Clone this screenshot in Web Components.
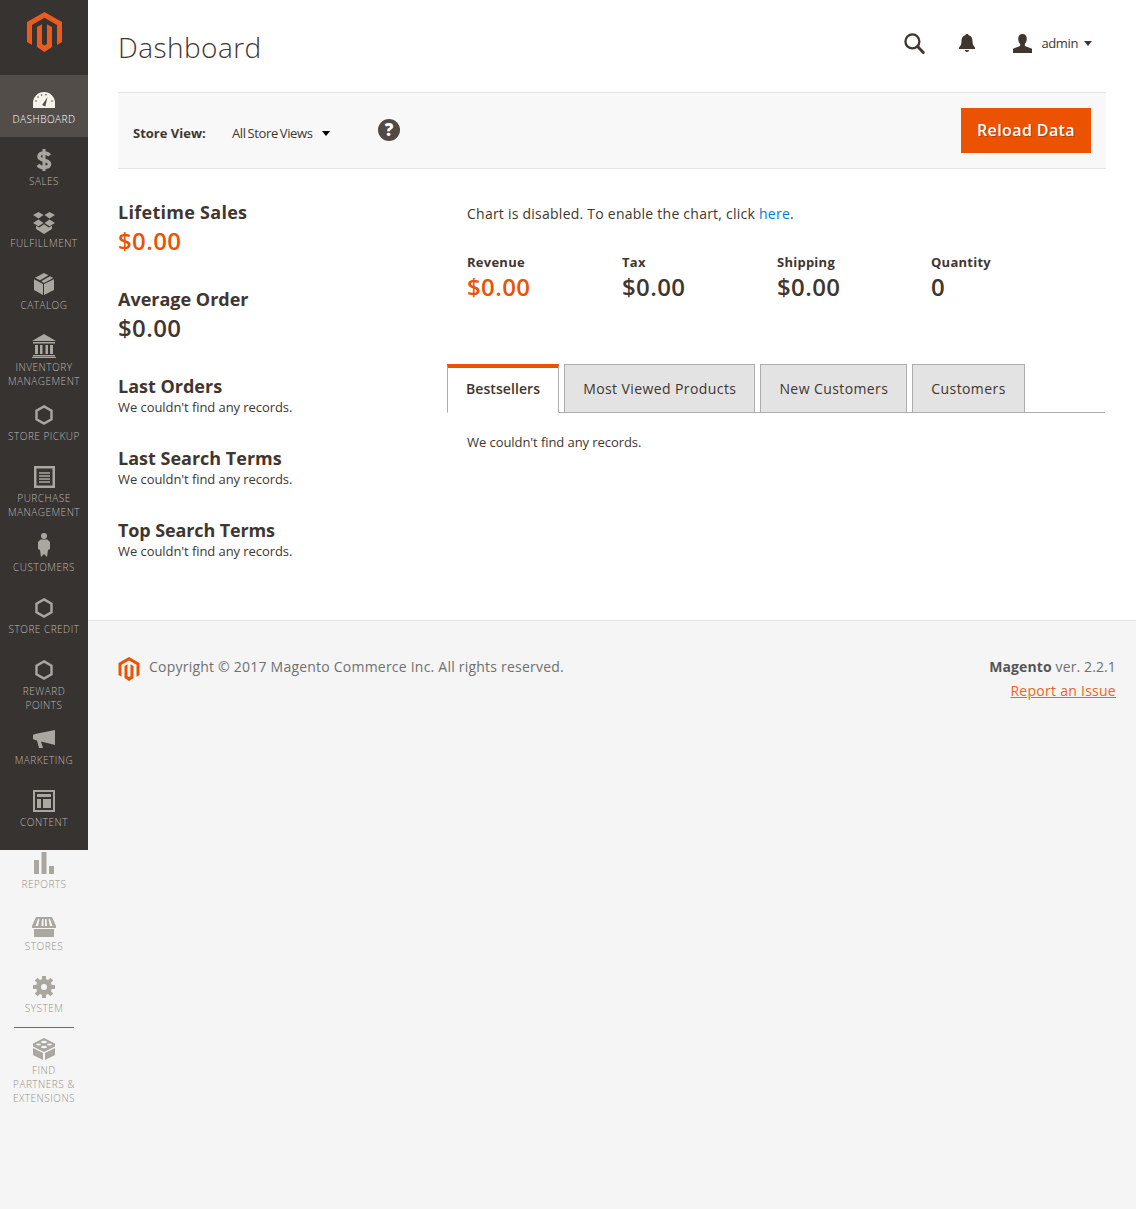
<!DOCTYPE html>
<html lang="en">
<head>
<meta charset="utf-8">
<title>Dashboard</title>
<style>
  html, body { margin: 0; height: 1209px; overflow: hidden; }
  body { background: #f5f5f5; font-family: "Open Sans", sans-serif; color: #41362f; display: flex; }
  svg { display: block; }
</style>
</head>
<body>
<template id="mark">
  <svg xmlns="http://www.w3.org/2000/svg" viewBox="0 0 35 40" fill="currentColor" width="100%" height="100%">
    <path d="M17.5 0 35 10v20l-5 3V13L17.5 5.8 5 13v20l-5-3V10z"/>
    <path d="M10 15l5-2.800V32l2.500 1.500L20 32V12.200l5 2.800v20l-7.500 5-7.500-5z"/>
  </svg>
</template>

<admin-sidebar>
  <nav-item label="Dashboard" active>
    <svg viewBox="0 0 22 16" width="22" height="16" style="margin-top:6px"><path fill="#f7f3eb" d="M0 16v-5a11 11 0 0 1 22 0v5z"/><g fill="#524d49"><circle cx="3" cy="9" r=".8"/><circle cx="5" cy="5" r=".8"/><circle cx="8.5" cy="3" r=".8"/><circle cx="13" cy="2.8" r=".8"/><circle cx="19" cy="9" r=".8"/><path d="M9.2 13 14.500 5l-2.200 9.400z"/></g></svg>
  </nav-item>
  <nav-item label="Sales">
    <svg viewBox="0 0 16 24" width="16" height="24" fill="none" stroke="#aaa6a0"><path stroke-width="3.600" d="M13.500 7.400C12.400 5.800 10.500 5 8 5 4.800 5 3 6.500 3 8.500c0 5 10.500 2.400 10.500 7.600 0 2.200-2.200 3.400-5.500 3.400-2.600 0-4.800-.9-6-2.600"/><path stroke-width="3" d="M8 1v22"/></svg>
  </nav-item>
  <nav-item label="Fulfillment">
    <svg viewBox="0 0 22 22" width="22" height="22" fill="#aaa6a0" style="margin-top:2px"><path d="M5.500 0 10.500 3 5.500 6.500 0 3zM16.500 0 22 3 16.500 6.500 11.500 3zM5.500 7.500l5 3.500-5 3.300L0 11zM16.500 7.500 22 11l-5.500 3.300-5-3.300zM11 12.300l4.800 3.200L19 13.800V17l-8 5-8-5v-3.200l3.200 1.700z"/></svg>
  </nav-item>
  <nav-item label="Catalog">
    <svg viewBox="0 0 20 22" width="20" height="22" fill="#aaa6a0" style="margin-top:1px"><path d="M10 0 14.500 2.300 6 7.200 1 4.800zM16 3.200 19.300 5 10 10 7.300 8.200zM0 6.300l9 4.700V22l-9-5zM20 6.300V17l-10 5V11z"/></svg>
  </nav-item>
  <nav-item label="Inventory Management">
    <svg viewBox="0 0 24 24" width="24" height="24" fill="#aaa6a0"><path d="M12 0 24 7H0z"/><path d="M1 8h22v1.500H1zM3 11h3v9H3zM8 11h2.500v9H8zM13.500 11H16v9h-2.500zM18 11h3v9h-3zM1 21h22v1.500H1zM0 23h24v1H0z"/></svg>
  </nav-item>
  <nav-item label="Store Pickup">
    <svg viewBox="0 0 18 20" width="18" height="20" fill="none" stroke="#aaa6a0" stroke-width="2.400" style="margin-top:2px"><path d="M9 1.400 16.500 5.700v8.600L9 18.600 1.500 14.300V5.700z"/></svg>
  </nav-item>
  <nav-item label="Purchase Management">
    <svg viewBox="0 0 21 22" width="21" height="22" fill="none" stroke="#aaa6a0" style="margin-top:1px"><rect x="1.250" y="1.250" width="18.500" height="19.500" stroke-width="2.500"/><path stroke-width="1.500" d="M5 7h11M5 10h11M5 13h11M5 16h11"/></svg>
  </nav-item>
  <nav-item label="Customers">
    <svg viewBox="0 0 12 24" width="12" height="24" fill="#aaa6a0" style="margin-top:-1px"><circle cx="6" cy="3" r="3"/><path d="M2.500 6.500h7L12 9v7l-2 1-1 7-3-3-3 3-1-7-2-1V9z"/></svg>
  </nav-item>
  <nav-item label="Store Credit">
    <svg viewBox="0 0 18 20" width="18" height="20" fill="none" stroke="#aaa6a0" stroke-width="2.400" style="margin-top:2px"><path d="M9 1.400 16.500 5.700v8.600L9 18.600 1.500 14.300V5.700z"/></svg>
  </nav-item>
  <nav-item label="Reward Points">
    <svg viewBox="0 0 18 20" width="18" height="20" fill="none" stroke="#aaa6a0" stroke-width="2.400" style="margin-top:2px"><path d="M9 1.400 16.500 5.700v8.600L9 18.600 1.500 14.300V5.700z"/></svg>
  </nav-item>
  <nav-item label="Marketing">
    <svg viewBox="0 0 22 18" width="22" height="18" fill="#aaa6a0" style="margin-top:3px"><path d="M22 0v15L8 11.500l2 6.500H6L4 10.500 2 10 0 9V5l2-1z"/></svg>
  </nav-item>
  <nav-item label="Content">
    <svg viewBox="0 0 22 22" width="22" height="22" fill="none" stroke="#aaa6a0" style="margin-top:1px"><rect x="1" y="1" width="20" height="20" stroke-width="2"/><path fill="#aaa6a0" stroke="none" d="M4 4h14v3H4zM4 9h4v9H4zM10 9h8v9h-8z"/></svg>
  </nav-item>
  <nav-item label="Reports" below>
    <svg viewBox="0 0 20 22" width="20" height="22" fill="#aaa6a0" style="margin-top:1px"><path d="M0 8h5v14H0zM7.500 0h5v22h-5zM15 14h5v8h-5z"/></svg>
  </nav-item>
  <nav-item label="Stores" below>
    <svg viewBox="0 0 24 20" width="24" height="20" fill="#aaa6a0" style="margin-top:4px"><path d="M4 0h16l4 9v2H0V9zM6 2 3.500 9H6l1.500-7zM10 2 9.500 9h2V2zM13 2v7h2l-.5-7zM16.500 2 18 9h2.500L18 2z" fill-rule="evenodd"/><path d="M2 12h20v8H2z"/></svg>
  </nav-item>
  <nav-item label="System" below>
    <svg viewBox="0 0 22 22" width="22" height="22" style="margin-top:1px"><circle cx="11" cy="11" r="5.500" fill="none" stroke="#aaa6a0" stroke-width="5"/><path stroke="#aaa6a0" stroke-width="4" d="M11 0v4M11 18v4M0 11h4M18 11h4M3.200 3.200 6 6M16 16l2.800 2.800M3.200 18.800 6 16M16 6l2.800-2.800"/></svg>
  </nav-item>
  <nav-item label="Find Partners &amp; Extensions" last below>
    <svg viewBox="0 0 22 22" width="22" height="22" fill="#aaa6a0" style="margin-top:1px"><path d="M11 0 22 5.500v3L11 14 0 8.500v-3z"/><path d="M0 10v7l10 5v-7zM22 10v7l-10 5v-7z"/><ellipse cx="11" cy="4" rx="3" ry="1.300" fill="#f5f5f5"/><ellipse cx="5.500" cy="6.500" rx="2.500" ry="1" fill="#f5f5f5"/><ellipse cx="16.500" cy="6.500" rx="2.500" ry="1" fill="#f5f5f5"/><ellipse cx="11" cy="9" rx="3" ry="1.200" fill="#f5f5f5"/></svg>
  </nav-item>
</admin-sidebar>

<admin-page>
  <page-header title="Dashboard"></page-header>
  <store-toolbar></store-toolbar>
  <dash-columns>
    <div slot="left">
      <stat-block title="Lifetime Sales" value="$0.00" accent spacing=".28px"></stat-block>
      <stat-block title="Average Order" value="$0.00"></stat-block>
      <stat-block title="Last Orders" note="We couldn't find any records."></stat-block>
      <stat-block title="Last Search Terms" note="We couldn't find any records."></stat-block>
      <stat-block title="Top Search Terms" note="We couldn't find any records." spacing="-.12px"></stat-block>
    </div>
    <div slot="right">
      <chart-totals></chart-totals>
      <dash-tabs></dash-tabs>
    </div>
  </dash-columns>
  <page-footer></page-footer>
</admin-page>

<script>
  function shadow(el, html) {
    el.attachShadow({ mode: "open" }).innerHTML = html;
    return el.shadowRoot;
  }

  function markClone() {
    return document.getElementById("mark").innerHTML;
  }

  class AdminSidebar extends HTMLElement {
    constructor() {
      super();
      shadow(this, `
        <style>
          :host { display: block; width: 88px; height: 850px; flex: none; background: #373330; }
          .logo { display: block; height: 75px; padding: 12px 0 0 27px; box-sizing: border-box; color: #eb5a1f; }
          .logo div { width: 35px; height: 40px; }
        </style>
        <div class="logo"><div>${markClone()}</div></div>
        <slot></slot>
      `);
    }
  }

  class NavItem extends HTMLElement {
    constructor() {
      super();
      shadow(this, `
        <style>
          :host { display: block; box-sizing: border-box; min-height: 62px; padding: 11px 0 4px; text-align: center;
                  color: #bab6b0; font-size: 10px; font-weight: 300; line-height: 14px; letter-spacing: .05em; text-transform: uppercase; }
          :host([active]) { background: #524d49; color: #fff; }
          :host([below]) { color: #95918b; }
          :host([last]) { position: relative; }
          :host([last])::before { content: ""; position: absolute; left: 14px; right: 14px; top: 1px; height: 1px; background: #736963; }
          .icon { height: 26px; display: flex; justify-content: center; align-items: flex-start; }
          .label { padding: 0 4px; }
          :host([last]) .label { padding: 0 8px; }
        </style>
        <div class="icon"><slot></slot></div>
        <div class="label"></div>
      `);
      this.shadowRoot.querySelector(".label").textContent = this.getAttribute("label");
    }
  }

  class AdminPage extends HTMLElement {
    constructor() {
      super();
      shadow(this, `
        <style>:host { display: block; flex: 1; min-width: 0; }</style>
        <slot></slot>
      `);
    }
  }

  class PageHeader extends HTMLElement {
    constructor() {
      super();
      shadow(this, `
        <style>
          :host { display: flex; align-items: flex-start; height: 92px; box-sizing: border-box; padding: 28px 44px 0 30px; background: #fff; }
          h1 { margin: -1px 0 0; flex: 1; font-size: 28px; font-weight: 300; line-height: 40px; letter-spacing: .45px; color: #41362f; }
          .acts { display: flex; align-items: center; height: 30px; color: #41362f; }
          .user { font-size: 13px; letter-spacing: -.03em; margin: 0 6px 0 9px; }
          .caret { width: 0; height: 0; border: 4.500px solid transparent; border-top: 5px solid #41362f; border-bottom: 0; }
        </style>
        <h1></h1>
        <div class="acts">
          <svg viewBox="0 0 22 22" width="21" height="21" fill="none" stroke="#41362f" stroke-width="2.400" style="margin-right:34px"><circle cx="8.800" cy="8.800" r="7.300"/><path stroke-width="3" stroke-linecap="round" d="M14.500 14.500 20.200 20.500"/></svg>
          <svg viewBox="0 0 16 18" width="16" height="18" fill="#41362f" style="margin-right:38px"><path d="M8 0c1 0 1.500.5 1.700 1.300C12.400 2 13.500 4.200 13.500 7c0 3.500 1 5 2.500 6.500V15H0v-1.500C1.500 12 2.500 10.500 2.500 7c0-2.800 1.100-5 3.800-5.700C6.500.5 7 0 8 0zM6 16h4c0 1.200-.8 2-2 2s-2-.8-2-2z"/></svg>
          <svg viewBox="0 0 20 20" width="19" height="19" fill="#41362f"><path d="M10 0c2.800 0 4.500 2 4.500 5 0 2.500-1 4.500-2 5.500v2l7.500 3V20H0v-4.500l7.500-3v-2c-1-1-2-3-2-5.500 0-3 1.700-5 4.500-5z"/></svg>
          <span class="user">admin</span>
          <span class="caret"></span>
        </div>
      `);
      this.shadowRoot.querySelector("h1").textContent = this.getAttribute("title");
    }
  }

  class StoreToolbar extends HTMLElement {
    constructor() {
      super();
      shadow(this, `
        <style>
          :host { display: block; background: #fff; padding: 0 30px; }
          .bar { display: flex; align-items: center; height: 77px; box-sizing: border-box; padding: 0 15px;
                 background: #f8f8f8; border-top: 1px solid #e3e3e3; border-bottom: 1px solid #e3e3e3; }
          b { font-size: 13px; font-weight: 700; width: 99px; margin-top: 5px; }
          .sel { font-size: 13px; letter-spacing: -.03em; word-spacing: -1px; width: 90px; margin-top: 5px; }
          .caret { width: 0; height: 0; border: 4.500px solid transparent; border-top: 5px solid #000; border-bottom: 0; margin-top: 5px; }
          .help { width: 22px; height: 22px; margin: -2px 0 0 48px; border-radius: 50%; background: #514943; color: #fff; font-size: 17px;
                  font-weight: 800; line-height: 22px; text-align: center; }
          button { margin-left: auto; width: 130px; height: 45px; border: 0; background: #eb5202; color: #fff; padding: 0 0 2px;
                   font: 600 16px "Open Sans", sans-serif; letter-spacing: .025em; text-shadow: 1px 1px 0 rgba(0,0,0,.25); }
        </style>
        <div class="bar">
          <b>Store View:</b>
          <span class="sel">All Store Views</span>
          <span class="caret"></span>
          <span class="help">?</span>
          <button type="button">Reload Data</button>
        </div>
      `);
    }
  }

  class DashColumns extends HTMLElement {
    constructor() {
      super();
      shadow(this, `
        <style>
          :host { display: grid; grid-template-columns: 329px 658px; padding: 30px 0 31px 30px; background: #fff; }
        </style>
        <slot name="left"></slot>
        <slot name="right"></slot>
      `);
    }
  }

  class StatBlock extends HTMLElement {
    constructor() {
      super();
      const value = this.getAttribute("value");
      const note = this.getAttribute("note");
      shadow(this, `
        <style>
          :host { display: block; margin-bottom: 29px; }
          h3 { margin: 0; font-size: 18px; font-weight: 700; line-height: 26px; letter-spacing: ${this.getAttribute("spacing") || 0}; color: #41362f; }
          .val { font-size: 24px; font-weight: 600; line-height: 31px; padding-bottom: 1px; letter-spacing: .4px; color: #41362f; }
          :host([accent]) .val { color: #eb5202; }
          .note { font-size: 13px; line-height: 17px; letter-spacing: -.07px; color: #41362f; }
        </style>
        <h3>${this.getAttribute("title")}</h3>
        ${value ? `<div class="val">${value}</div>` : ""}
        ${note ? `<div class="note">${note}</div>` : ""}
      `);
    }
  }

  class ChartTotals extends HTMLElement {
    constructor() {
      super();
      const totals = [["Revenue", "$0.00", "#eb5202"], ["Tax", "$0.00"], ["Shipping", "$0.00"], ["Quantity", "0"]];
      shadow(this, `
        <style>
          :host { display: block; padding: 5px 0 0 20px; }
          p { margin: 0 0 29px; font-size: 14px; line-height: 20px; letter-spacing: .24px; color: #41362f; }
          a { color: #007bdb; text-decoration: none; }
          .row { display: grid; grid-template-columns: 155px 155px 154px 154px; }
          b { display: block; font-size: 13px; line-height: 18px; font-weight: 700; letter-spacing: .25px; }
          span { display: block; font-size: 24px; line-height: 32px; font-weight: 600; letter-spacing: .4px; }
        </style>
        <p>Chart is disabled. To enable the chart, click <a href="#">here</a>.</p>
        <div class="row">
          ${totals.map(t => `<div><b>${t[0]}</b><span style="color:${t[2] || "#41362f"}">${t[1]}</span></div>`).join("")}
        </div>
      `);
    }
  }

  class DashTabs extends HTMLElement {
    constructor() {
      super();
      const tabs = ["Bestsellers", "Most Viewed Products", "New Customers", "Customers"];
      shadow(this, `
        <style>
          :host { display: block; margin-top: 61px; }
          .tabs { display: flex; gap: 5px; width: 658px; height: 49px; box-sizing: border-box; border-bottom: 1px solid #adadad; }
          .tab { box-sizing: border-box; height: 49px; padding: 14px 18px 0; background: #e3e3e3; border: 1px solid #adadad;
                 font-size: 14px; line-height: 19px; letter-spacing: .41px; color: #41362f; }
          .tab.on { background: #fff; border-top: 4px solid #eb5202; border-bottom-color: #fff; padding-top: 11px; font-weight: 600; letter-spacing: .08px; }
          .panel { padding: 21px 20px 0; font-size: 13px; line-height: 17px; letter-spacing: -.07px; color: #41362f; }
        </style>
        <div class="tabs">
          ${tabs.map((t, i) => `<div class="tab${i ? "" : " on"}">${t}</div>`).join("")}
        </div>
        <div class="panel">We couldn't find any records.</div>
      `);
    }
  }

  class PageFooter extends HTMLElement {
    constructor() {
      super();
      shadow(this, `
        <style>
          :host { display: flex; justify-content: space-between; border-top: 1px solid #e3e3e3; padding: 36px 20px 0 30px;
                  font-size: 14px; line-height: 20px; color: #707070; }
          .left { display: flex; align-items: flex-start; gap: 9px; letter-spacing: .22px; }
          .logo { width: 22px; height: 24px; color: #eb5202; }
          .right { text-align: right; line-height: 24px; margin-top: -2px; letter-spacing: .12px; }
          b { color: #555; font-weight: 700; }
          a { color: #f26322; letter-spacing: .27px; }
        </style>
        <div class="left"><div class="logo">${markClone()}</div><span>Copyright © 2017 Magento Commerce Inc. All rights reserved.</span></div>
        <div class="right"><b>Magento</b> ver. 2.2.1<br><a href="#">Report an Issue</a></div>
      `);
    }
  }

  customElements.define("admin-sidebar", AdminSidebar);
  customElements.define("nav-item", NavItem);
  customElements.define("admin-page", AdminPage);
  customElements.define("page-header", PageHeader);
  customElements.define("store-toolbar", StoreToolbar);
  customElements.define("dash-columns", DashColumns);
  customElements.define("stat-block", StatBlock);
  customElements.define("chart-totals", ChartTotals);
  customElements.define("dash-tabs", DashTabs);
  customElements.define("page-footer", PageFooter);
</script>
</body>
</html>
